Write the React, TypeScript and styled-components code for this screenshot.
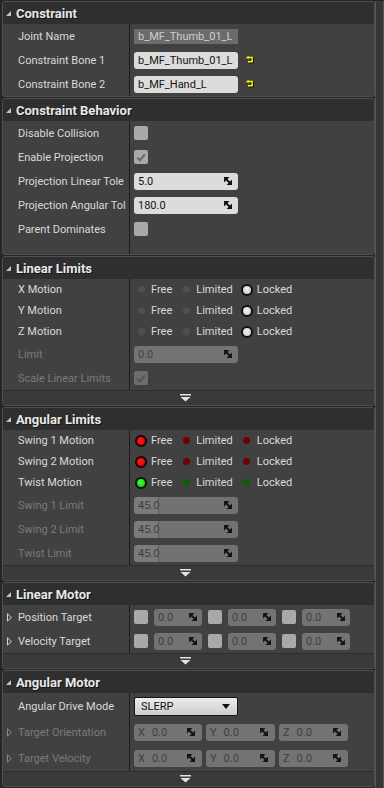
import React from "react";
import styled, { createGlobalStyle } from "styled-components";

const Global = createGlobalStyle`
  body { margin: 0; background: #262626; }
  * { box-sizing: border-box; }
`;

const Frame = styled.div`
  width: 384px;
  height: 788px;
  overflow: hidden;
  display: flex;
  background: #262626;
  padding: 1px 0 0 2px;
  font-family: Roboto, "Noto Sans", sans-serif;
  font-size: 11px;
  color: #d9d9d9;
`;

const Column = styled.div`
  flex: 1;
  min-width: 0;
  display: flex;
  flex-direction: column;
  gap: 1px;
`;

const Scroll = styled.div`
  width: 9px;
  flex: none;
  background: #363636;
  border-left: 1px solid #555;
  border-right: 1px solid #555;
`;

const Card = styled.section`
  border: 1px solid #4f4f4f;
  border-radius: 3px;
  overflow: hidden;
  background: #414141;
`;

const Header = styled.div`
  height: 22px;
  display: flex;
  align-items: center;
  gap: 5px;
  padding-left: 3px;
  background: #2f2f2f;
  font-size: 13px;
  font-weight: 700;
  color: #e8e8e8;
  text-shadow: 1px 1px 0 #151515;
`;

const Expander = styled.div`
  height: 15px;
  display: flex;
  align-items: center;
  justify-content: center;
  padding-right: 7px;
  background: #3a3a3a;
  border-top: 1px solid #2d2d2d;
`;

const Row = styled.div<{ $h: number }>`
  display: flex;
  height: ${(p) => p.$h}px;
`;

const Name = styled.div<{ $dim?: boolean; $arrow?: boolean }>`
  width: 127px;
  flex: none;
  display: flex;
  align-items: center;
  gap: 6px;
  padding-left: ${(p) => (p.$arrow ? 4 : 15)}px;
  border-right: 1px solid #1c1c1c;
  color: ${(p) => (p.$dim ? "#7a7a7a" : "#d9d9d9")};
  white-space: nowrap;
  overflow: hidden;
`;

const Value = styled.div<{ $gap?: number }>`
  flex: 1;
  display: flex;
  align-items: center;
  gap: ${(p) => p.$gap ?? 0}px;
  padding-left: 4px;
`;

const TextBox = styled.div<{ $ro?: boolean }>`
  width: 104px;
  height: ${(p) => (p.$ro ? 15 : 17)}px;
  display: flex;
  align-items: center;
  padding-left: 4px;
  border-radius: ${(p) => (p.$ro ? 0 : 3)}px;
  background: ${(p) => (p.$ro ? "#6b6b6b" : "#dcdcdc")};
  color: ${(p) => (p.$ro ? "#cfcfcf" : "#141414")};
  white-space: nowrap;
  overflow: hidden;
`;

const NumBox = styled.div<{ $w: number; $dim?: boolean; $fill?: boolean; $pr?: number }>`
  width: ${(p) => p.$w}px;
  height: 17px;
  flex: none;
  display: flex;
  align-items: center;
  justify-content: space-between;
  padding: 0 ${(p) => p.$pr ?? 6}px 0 4px;
  border-radius: 3px;
  background: ${(p) =>
    p.$fill
      ? "linear-gradient(to right, #7b7b7b 0 24px, #5d5d5d 24px 25px, #727272 25px)"
      : p.$dim
      ? "#737373"
      : "#dcdcdc"};
  color: ${(p) => (p.$dim || p.$fill ? "#3f3f3f" : "#141414")};
`;

const Axis = styled.span`
  display: flex;
  gap: 7px;
`;

const Check = styled.div<{ $dim?: boolean }>`
  width: 14px;
  height: 14px;
  flex: none;
  display: flex;
  align-items: center;
  justify-content: center;
  border-radius: 2px;
  background: ${(p) => (p.$dim ? "#6d6d6d" : "#a9a9a9")};
`;

const Combo = styled.div`
  width: 104px;
  height: 19px;
  display: flex;
  align-items: center;
  justify-content: space-between;
  padding: 0 7px 0 6px;
  border: 1px solid #161616;
  border-radius: 2px;
  background: linear-gradient(#ececec, #cdcdcd);
  color: #111;
`;

const RadioGroup = styled.div`
  display: flex;
  align-items: center;
  padding-left: 1px;
`;

const Option = styled.label`
  display: flex;
  align-items: center;
  gap: 4px;
  margin-right: 8px;
`;

const Slot = styled.span`
  width: 12px;
  height: 12px;
  display: flex;
  align-items: center;
  justify-content: center;
`;

type Tone = "grey" | "red" | "green";

const palette: Record<Tone, { on: string; off: string; ring: string }> = {
  grey: { on: "radial-gradient(circle at 45% 40%, #f2f2f2, #c4c4c4)", off: "#574c4c", ring: "#111" },
  red: { on: "radial-gradient(circle at 45% 40%, #ff1a1a, #d00000)", off: "#6e0000", ring: "#1e0000" },
  green: { on: "radial-gradient(circle at 45% 40%, #3dff3d, #16c016)", off: "#0b5e0b", ring: "#021a02" },
};

const Dot = styled.span<{ $on: boolean; $tone: Tone }>`
  display: block;
  border-radius: 50%;
  width: ${(p) => (p.$on ? 12 : 7)}px;
  height: ${(p) => (p.$on ? 12 : 7)}px;
  background: ${(p) => (p.$on ? palette[p.$tone].on : palette[p.$tone].off)};
  border: ${(p) => (p.$on ? `2px solid ${palette[p.$tone].ring}` : "none")};
`;

const Spacer = styled.div<{ $h: number }>`
  display: flex;
  height: ${(p) => p.$h}px;
`;

const CollapseIcon = () => (
  <svg width="5" height="5" viewBox="0 0 5 5">
    <path d="M5 0V5H0Z" fill="#c4c4c4" />
  </svg>
);

const ExpandArrow = ({ dim }: { dim?: boolean }) => (
  <svg width="5" height="9" viewBox="0 0 5 9" style={{ flex: "none" }}>
    <path d="M0.5 0.8L4.4 4.5L0.5 8.2Z" fill="none" stroke={dim ? "#8a8a8a" : "#d4d4d4"} strokeWidth="1" />
  </svg>
);

const SpinIcon = () => (
  <svg width="8" height="8" viewBox="0 0 8 8">
    <path d="M0 0H5.5L0 5.5Z M8 8H2.5L8 2.5Z" fill="#141414" />
    <path d="M1 1L7 7" stroke="#141414" strokeWidth="2" />
  </svg>
);

const CheckMark = ({ dim }: { dim?: boolean }) => (
  <svg width="10" height="9" viewBox="0 0 10 9">
    <path d="M1.2 4.8L3.8 7.2L8.8 1.5" fill="none" stroke={dim ? "#555" : "#6a6a6a"} strokeWidth="2.2" />
  </svg>
);

const UseIcon = () => (
  <svg width="10" height="9" viewBox="0 0 10 9" style={{ marginLeft: 8 }}>
    <g transform="translate(1 1)" stroke="#111" fill="none" strokeWidth="1.4">
      <path d="M2 1.5H6.2V5.8H2" />
    </g>
    <path d="M2 1.5H6.2V5.8H2" fill="none" stroke="#f5f500" strokeWidth="1.4" />
    <path d="M0 1.5L2.6 -0.3V3.3Z" fill="#f5f500" />
  </svg>
);

const DownIcon = () => (
  <svg width="11" height="8" viewBox="0 0 11 8">
    <rect x="0" y="0" width="11" height="1.5" fill="#e4e4e4" />
    <path d="M0.5 3H10.5L5.5 7.5Z" fill="#e4e4e4" />
  </svg>
);

const Caret = () => (
  <svg width="8" height="5" viewBox="0 0 8 5">
    <path d="M0 0H8L4 5Z" fill="#111" />
  </svg>
);

const Section = ({ title, more, children }: { title: string; more?: boolean; children: React.ReactNode }) => (
  <Card>
    <Header>
      <CollapseIcon />
      {title}
    </Header>
    {children}
    {more && (
      <Expander>
        <DownIcon />
      </Expander>
    )}
  </Card>
);

const Radios = ({ tone, selected }: { tone: Tone; selected: number }) => (
  <RadioGroup>
    {["Free", "Limited", "Locked"].map((label, i) => (
      <Option key={label}>
        <Slot>
          <Dot $on={i === selected} $tone={tone} />
        </Slot>
        {label}
      </Option>
    ))}
  </RadioGroup>
);

const Num = ({ v, w = 104, dim, fill }: { v: string; w?: number; dim?: boolean; fill?: boolean }) => (
  <NumBox $w={w} $dim={dim} $fill={fill}>
    {v}
    <SpinIcon />
  </NumBox>
);

const Vec3 = () => (
  <Value $gap={6}>
    {[0, 1, 2].map((i) => (
      <React.Fragment key={i}>
        <Check />
        <NumBox $w={48} $dim $pr={5}>
          0.0
          <SpinIcon />
        </NumBox>
      </React.Fragment>
    ))}
  </Value>
);

const Rot3 = () => (
  <Value $gap={4}>
    {["X", "Y", "Z"].map((a, i) => (
      <NumBox key={a} $w={i === 0 ? 68 : 69} $dim $pr={7}>
        <Axis>
          <span>{a}</span>
          <span>0.0</span>
        </Axis>
        <SpinIcon />
      </NumBox>
    ))}
  </Value>
);

export default function App() {
  return (
    <Frame>
      <Global />
      <Column>
        <Section title="Constraint">
          <Row $h={24}>
            <Name>Joint Name</Name>
            <Value>
              <TextBox $ro>b_MF_Thumb_01_L</TextBox>
            </Value>
          </Row>
          <Row $h={24}>
            <Name>Constraint Bone 1</Name>
            <Value>
              <TextBox>b_MF_Thumb_01_L</TextBox>
              <UseIcon />
            </Value>
          </Row>
          <Row $h={24}>
            <Name>Constraint Bone 2</Name>
            <Value>
              <TextBox>b_MF_Hand_L</TextBox>
              <UseIcon />
            </Value>
          </Row>
        </Section>

        <Section title="Constraint Behavior">
          <Row $h={24}>
            <Name>Disable Collision</Name>
            <Value>
              <Check />
            </Value>
          </Row>
          <Row $h={24}>
            <Name>Enable Projection</Name>
            <Value>
              <Check>
                <CheckMark />
              </Check>
            </Value>
          </Row>
          <Row $h={24}>
            <Name>Projection Linear Tole</Name>
            <Value>
              <Num v="5.0" />
            </Value>
          </Row>
          <Row $h={24}>
            <Name>Projection Angular Tol</Name>
            <Value>
              <Num v="180.0" />
            </Value>
          </Row>
          <Row $h={24}>
            <Name>Parent Dominates</Name>
            <Value>
              <Check />
            </Value>
          </Row>
          <Spacer $h={13}>
            <Name />
          </Spacer>
        </Section>

        <Section title="Linear Limits" more>
          <Row $h={21}>
            <Name>X Motion</Name>
            <Value>
              <Radios tone="grey" selected={2} />
            </Value>
          </Row>
          <Row $h={21}>
            <Name>Y Motion</Name>
            <Value>
              <Radios tone="grey" selected={2} />
            </Value>
          </Row>
          <Row $h={21}>
            <Name>Z Motion</Name>
            <Value>
              <Radios tone="grey" selected={2} />
            </Value>
          </Row>
          <Row $h={24}>
            <Name $dim>Limit</Name>
            <Value>
              <Num v="0.0" dim />
            </Value>
          </Row>
          <Row $h={24}>
            <Name $dim>Scale Linear Limits</Name>
            <Value>
              <Check $dim>
                <CheckMark dim />
              </Check>
            </Value>
          </Row>
        </Section>

        <Section title="Angular Limits" more>
          <Row $h={21}>
            <Name>Swing 1 Motion</Name>
            <Value>
              <Radios tone="red" selected={0} />
            </Value>
          </Row>
          <Row $h={21}>
            <Name>Swing 2 Motion</Name>
            <Value>
              <Radios tone="red" selected={0} />
            </Value>
          </Row>
          <Row $h={21}>
            <Name>Twist Motion</Name>
            <Value>
              <Radios tone="green" selected={0} />
            </Value>
          </Row>
          <Row $h={24}>
            <Name $dim>Swing 1 Limit</Name>
            <Value>
              <Num v="45.0" fill />
            </Value>
          </Row>
          <Row $h={24}>
            <Name $dim>Swing 2 Limit</Name>
            <Value>
              <Num v="45.0" fill />
            </Value>
          </Row>
          <Row $h={24}>
            <Name $dim>Twist Limit</Name>
            <Value>
              <Num v="45.0" fill />
            </Value>
          </Row>
        </Section>

        <Section title="Linear Motor" more>
          <Row $h={24}>
            <Name $arrow>
              <ExpandArrow />
              Position Target
            </Name>
            <Vec3 />
          </Row>
          <Row $h={24}>
            <Name $arrow>
              <ExpandArrow />
              Velocity Target
            </Name>
            <Vec3 />
          </Row>
        </Section>

        <Section title="Angular Motor" more>
          <Row $h={26}>
            <Name>Angular Drive Mode</Name>
            <Value>
              <Combo>
                SLERP
                <Caret />
              </Combo>
            </Value>
          </Row>
          <Row $h={26}>
            <Name $arrow $dim>
              <ExpandArrow dim />
              Target Orientation
            </Name>
            <Rot3 />
          </Row>
          <Row $h={26}>
            <Name $arrow $dim>
              <ExpandArrow dim />
              Target Velocity
            </Name>
            <Rot3 />
          </Row>
        </Section>
      </Column>
      <Scroll />
    </Frame>
  );
}
